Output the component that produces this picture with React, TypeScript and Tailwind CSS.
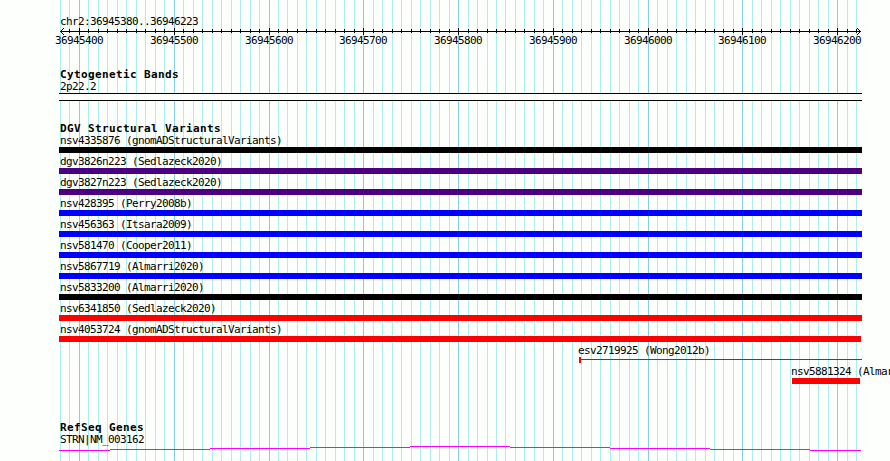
import React from "react";

const TICK_STEP = 9.478;
const ORIGIN = 79.46;
const ticks = Array.from({ length: 85 }, (_, i) => {
  const k = i - 2;
  return { x: Math.floor(ORIGIN + k * TICK_STEP), major: k % 10 === 0, label: 36945400 + k * 10 };
});

const mono = "font-['DejaVu_Sans_Mono','Liberation_Mono',monospace] whitespace-pre";
const small = `${mono} text-[11px] leading-[14px] tracking-[-0.62px]`;
const bold = `${mono} font-bold text-[11px] leading-[13px] tracking-[0.38px] ml-[1px]`;

const variants = [
  { name: "nsv4335876 (gnomADStructuralVariants)", bar: "bg-black w-[803px]" },
  { name: "dgv3826n223 (Sedlazeck2020)", bar: "bg-[#4b0082] w-[803px]" },
  { name: "dgv3827n223 (Sedlazeck2020)", bar: "bg-[#4b0082] w-[803px]" },
  { name: "nsv428395 (Perry2008b)", bar: "bg-[#0000ff] w-[803px]" },
  { name: "nsv456363 (Itsara2009)", bar: "bg-[#0000ff] w-[803px]" },
  { name: "nsv581470 (Cooper2011)", bar: "bg-[#0000ff] w-[803px]" },
  { name: "nsv5867719 (Almarri2020)", bar: "bg-[#0000ff] w-[803px]" },
  { name: "nsv5833200 (Almarri2020)", bar: "bg-black w-[803px]" },
  { name: "nsv6341850 (Sedlazeck2020)", bar: "bg-[#ff0000] w-[803px]" },
  { name: "nsv4053724 (gnomADStructuralVariants)", bar: "bg-[#ff0000] w-[802px]" },
];

function GridLines() {
  return (
    <svg className="absolute inset-0" width="890" height="461" shapeRendering="crispEdges">
      {ticks.map((t) => (
        <rect key={t.x} x={t.x} y="0" width="1" height="461" fill={t.major ? "#87ceeb" : "#afeeee"} />
      ))}
    </svg>
  );
}

function Ruler() {
  return (
    <div className="h-[20px] relative">
      <svg className="block" width="890" height="7" shapeRendering="crispEdges">
        <rect x="60" y="3" width="801" height="1" />
        {ticks.slice(1).map((t) => (
          <rect key={t.x} x={t.x} y={t.major ? 0 : 1} width="1" height={t.major ? 7 : 4} />
        ))}
        <path d="M61 2h1v1h-1zM62 1h1v1h-1zM63 0h1v1h-1zM61 4h1v1h-1zM62 5h1v1h-1zM63 6h1v1h-1z" />
        <path d="M859 2h1v1h-1zM858 1h1v1h-1zM857 0h1v1h-1zM859 4h1v1h-1zM858 5h1v1h-1zM857 6h1v1h-1z" />
      </svg>
      {ticks
        .filter((t) => t.major)
        .map((t) => (
          <span key={t.x} className={`absolute top-[6px] ${small}`} style={{ left: t.x - 24 }}>
            {t.label}
          </span>
        ))}
    </div>
  );
}

export default function App() {
  return (
    <main className="relative w-[890px] h-[461px] overflow-hidden bg-[#fdfffc] text-black">
      <GridLines />
      <div className="relative flex flex-col pt-[15px]">
        <div className={`h-[13px] ml-[60px] ${small}`}>chr2:36945380..36946223</div>
        <Ruler />

        <section className="mt-[20px] ml-[59px]">
          <h2 className={`h-[12px] ${bold}`}>Cytogenetic Bands</h2>
          <div className={`h-[13px] ml-[1px] ${small}`}>2p22.2</div>
          <div className="w-[803px] h-[8px] border-y border-black bg-[#fdfffc]" />
        </section>

        <section className="mt-[21px] ml-[59px]">
          <h2 className={`h-[12px] ${bold}`}>DGV Structural Variants</h2>
          {variants.map((v) => (
            <div key={v.name} className="h-[21px]">
              <div className={`h-[13px] ml-[1px] ${small}`}>{v.name}</div>
              <div className={`h-[6px] ${v.bar}`} />
            </div>
          ))}
          <div className="h-[21px] ml-[519px]">
            <div className={`h-[13px] ${small}`}>esv2719925 (Wong2012b)</div>
            <div className="flex ml-[1px] h-[6px]">
              <div className="w-[2px] h-[6px] bg-[#ff0000]" />
              <div className="w-[281px] h-px mt-[2px] bg-[#f00000]" />
            </div>
          </div>
          <div className="h-[21px] ml-[732px]">
            <div className={`h-[13px] ${small}`}>nsv5881324 (Almarri2020)</div>
            <div className="ml-[1px] w-[68px] h-[6px] bg-[#ff0000]" />
          </div>
        </section>

        <section className="mt-[35px] ml-[59px]">
          <h2 className={`h-[12px] ${bold}`}>RefSeq Genes</h2>
          <div className={`h-[13px] ml-[1px] ${small}`}>STRN|NM_003162</div>
          <svg className="block" width="803" height="5" shapeRendering="crispEdges" fill="#ff00ff">
            {[4, 3, 2, 1, 0, 1, 2, 3, 4].map((y, i) => {
              const x = i === 0 ? 0 : i * 100 - 49;
              const end = i === 8 ? 802 : i * 100 + 51;
              return <rect key={i} x={x} y={y} width={end - x} height="1" />;
            })}
          </svg>
        </section>
      </div>
    </main>
  );
}
